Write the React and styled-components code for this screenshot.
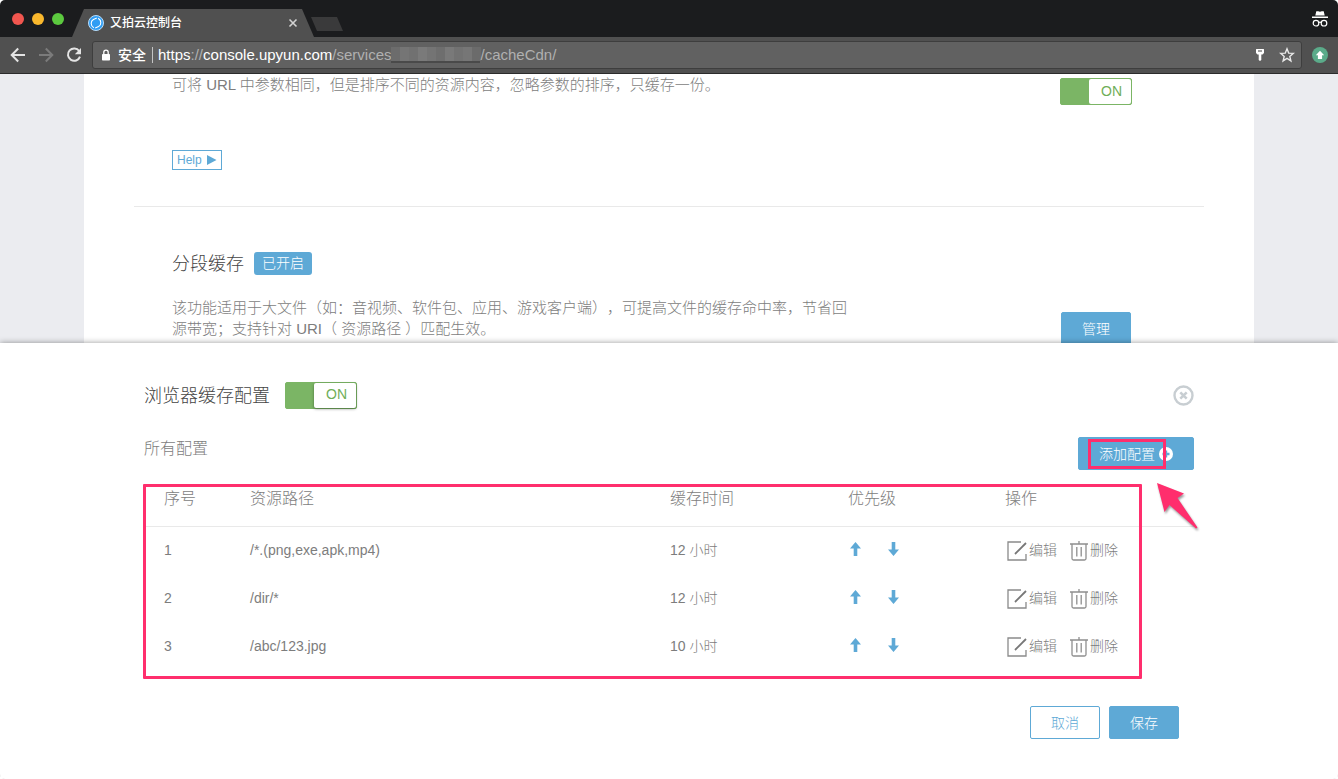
import { useState } from "react"
import styled, { createGlobalStyle } from "styled-components"

const configs = [
    { id: 1, path: "/*.(png,exe,apk,mp4)", time: "12 小时" },
    { id: 2, path: "/dir/*", time: "12 小时" },
    { id: 3, path: "/abc/123.jpg", time: "10 小时" },
]

const mosaic = ["#6c6c6c", "#757575", "#717171", "#7a7a7a", "#747474", "#6e6e6e", "#797979", "#727272", "#767676", "#6b6b6b"]

export default function App() {
    return (
        <>
            <GlobalStyle />
            <Window>
                <Browser />
                <Services />
                <CacheDrawer />
            </Window>
        </>
    )
}

function Browser() {
    return (
        <header>
            <TabStrip>
                <Lights>
                    <Light color="#f1564f" />
                    <Light color="#fab82d" />
                    <Light color="#5cc93f" />
                </Lights>
                <Tab>
                    <svg width="16" height="16" viewBox="0 0 16 16" fill="none">
                        <circle cx="8" cy="8" r="7.5" fill="#2f9df4" stroke="#b9ddfa" />
                        <path d="M5.800 12.800C2.400 10.800 2.400 6 5.400 4.400L8.800 3M10.200 3.200c3.400 2 3.400 6.800.4 8.400L7.200 13" stroke="#fff" strokeWidth="1.100" />
                    </svg>
                    <TabTitle>又拍云控制台</TabTitle>
                    <IconButton aria-label="关闭标签页">
                        <svg width="10" height="10" viewBox="0 0 10 10" stroke="#d2d2d2" strokeWidth="1.600">
                            <path d="M1.500 1.500l7 7M8.500 1.500l-7 7" />
                        </svg>
                    </IconButton>
                </Tab>
                <NewTab aria-label="新标签页" />
                <Incognito width="18" height="18" viewBox="0 0 18 18" fill="#fff">
                    <path d="M5.300 1.200h1.900l1.800.6 1.800-.6h1.900l1 4.300H4.300zM1 6.600h16v1.500H1z" />
                    <g fill="none" stroke="#fff" strokeWidth="1.200">
                        <circle cx="5" cy="13.200" r="2.800" />
                        <circle cx="13" cy="13.200" r="2.800" />
                        <path d="M7.700 12.600q1.300-.9 2.600 0" />
                    </g>
                </Incognito>
            </TabStrip>
            <Toolbar>
                <NavButtons>
                    <IconButton aria-label="后退">
                        <svg width="16" height="16" viewBox="0 0 16 16" fill="none" stroke="#e4e4e4" strokeWidth="2">
                            <path d="M15 8H2M8.200 1.500L1.700 8l6.500 6.500" />
                        </svg>
                    </IconButton>
                    <IconButton aria-label="前进">
                        <svg width="16" height="16" viewBox="0 0 16 16" fill="none" stroke="#7b7b7b" strokeWidth="2">
                            <path d="M1 8h13M7.800 1.500L14.300 8l-6.500 6.500" />
                        </svg>
                    </IconButton>
                    <IconButton aria-label="重新加载">
                        <svg width="16" height="16" viewBox="0 0 16 16" fill="none" stroke="#e4e4e4" strokeWidth="2">
                            <path d="M13.200 4A6.200 6.200 0 1 0 14 9.700" />
                            <path d="M15 1v6.200H8.800z" fill="#e4e4e4" stroke="none" />
                        </svg>
                    </IconButton>
                </NavButtons>
                <AddressBar>
                    <svg width="8" height="12" viewBox="0 0 8 12">
                        <rect y="5" width="8" height="6.500" rx=".8" fill="#fff" />
                        <path d="M1.800 5.500V3.300a2.200 2.200 0 0 1 4.400 0v2.200" fill="none" stroke="#fff" strokeWidth="1.300" />
                    </svg>
                    <Secure>安全</Secure>
                    <Url>
                        <b>https</b>://<b>console.upyun.com</b>/services
                        <Mosaic>
                            {mosaic.map((color, i) => <Tile key={i} color={color} />)}
                        </Mosaic>
                        /cacheCdn/
                    </Url>
                    <BarActions>
                        <IconButton aria-label="密码">
                            <svg width="10" height="14" viewBox="0 0 10 14">
                                <path d="M1.500 1h7q.5 0 .5.500V5L7.500 6.500H6.300V12l-1.300 1-1.300-1V6.500H2.500L1 5V1.500Q1 1 1.500 1z" fill="#fff" />
                                <path d="M3 3h4" stroke="#616161" strokeWidth="1.200" />
                            </svg>
                        </IconButton>
                        <IconButton aria-label="收藏">
                            <svg width="16" height="16" viewBox="0 0 16 16" fill="none" stroke="#e8e8e8" strokeWidth="1.400">
                                <path d="M8 1.800l1.700 4.300 4.600.3-3.500 3 1.100 4.500L8 11.400l-3.900 2.500 1.100-4.500-3.500-3 4.600-.3z" />
                            </svg>
                        </IconButton>
                    </BarActions>
                </AddressBar>
                <IconButton aria-label="扩展">
                    <svg width="16" height="16" viewBox="0 0 16 16">
                        <circle cx="8" cy="8" r="8" fill="#5bab8a" />
                        <path d="M8 3.800l4.200 4.400h-2.100V12H5.900V8.200H3.800z" fill="#fff" />
                    </svg>
                </IconButton>
            </Toolbar>
        </header>
    )
}

function Services() {
    return (
        <Page>
            <Card>
                <Section>
                    <div>
                        <Description>可将 URL 中参数相同，但是排序不同的资源内容，忽略参数的排序，只缓存一份。</Description>
                        <HelpButton>
                            Help
                            <svg width="10" height="10" viewBox="0 0 10 10" fill="#5ea9d6">
                                <path d="M0 0l9.500 5L0 10z" />
                            </svg>
                        </HelpButton>
                    </div>
                    <SectionAction>
                        <Toggle label="忽略参数排序" />
                    </SectionAction>
                </Section>
                <Divider />
                <Section $spaced>
                    <div>
                        <Heading>
                            <h2>分段缓存</h2>
                            <Badge>已开启</Badge>
                        </Heading>
                        <Description>
                            该功能适用于大文件（如：音视频、软件包、应用、游戏客户端），可提高文件的缓存命中率，节省回源带宽；支持针对 URI（ 资源路径 ）匹配生效。
                        </Description>
                    </div>
                    <SectionAction $spaced>
                        <Button>管理</Button>
                    </SectionAction>
                </Section>
            </Card>
        </Page>
    )
}

function CacheDrawer() {
    return (
        <Drawer>
            <DrawerContent>
                <DrawerHeader>
                    <h2>浏览器缓存配置</h2>
                    <Toggle label="浏览器缓存配置" raised />
                    <IconButton aria-label="关闭">
                        <svg width="21" height="21" viewBox="0 0 21 21" fill="none" stroke="#c8ced2">
                            <circle cx="10.500" cy="10.500" r="9" strokeWidth="2.400" />
                            <path d="M7.300 7.300l6.400 6.400M13.700 7.300l-6.400 6.400" strokeWidth="2.600" />
                        </svg>
                    </IconButton>
                </DrawerHeader>
                <ListHeader>
                    <h3>所有配置</h3>
                    <AddButton>
                        添加配置
                        <svg width="14" height="14" viewBox="0 0 14 14">
                            <circle cx="7" cy="7" r="7" fill="#fff" />
                            <path d="M7 3.500v7M3.500 7h7" stroke="#5ea9d6" strokeWidth="2.400" />
                        </svg>
                        <AddMark />
                    </AddButton>
                </ListHeader>
                <TableArea>
                    <Table>
                        <colgroup>
                            <col width="86" />
                            <col width="40%" />
                            <col width="178" />
                            <col width="157" />
                            <col />
                        </colgroup>
                        <thead>
                            <tr>
                                <th>序号</th>
                                <th>资源路径</th>
                                <th>缓存时间</th>
                                <th>优先级</th>
                                <th>操作</th>
                            </tr>
                        </thead>
                        <tbody>
                            {configs.map((config) => (
                                <tr key={config.id}>
                                    <td>{config.id}</td>
                                    <td>{config.path}</td>
                                    <td>{config.time}</td>
                                    <td>
                                        <Priority>
                                            <IconButton aria-label="上移">
                                                <ArrowIcon />
                                            </IconButton>
                                            <IconButton aria-label="下移">
                                                <ArrowIcon down />
                                            </IconButton>
                                        </Priority>
                                    </td>
                                    <td>
                                        <Actions>
                                            <ActionButton>
                                                <EditIcon />
                                                编辑
                                            </ActionButton>
                                            <ActionButton>
                                                <TrashIcon />
                                                删除
                                            </ActionButton>
                                        </Actions>
                                    </td>
                                </tr>
                            ))}
                        </tbody>
                    </Table>
                    <TableMark />
                    <Pointer width="46" height="52" viewBox="0 0 46 52">
                        <path d="M2 1l27 10.500-6.500 4.500L42.500 45.500l-1.500 1L14.500 23 9.500 30z" fill="#ff2e6d" />
                    </Pointer>
                </TableArea>
                <DrawerFooter>
                    <Button $outline>取消</Button>
                    <Button>保存</Button>
                </DrawerFooter>
            </DrawerContent>
        </Drawer>
    )
}

function Toggle({ label, raised }) {
    const [on, setOn] = useState(true)

    return (
        <Switch $raised={raised}>
            <input type="checkbox" aria-label={label} checked={on} onChange={() => setOn(!on)} />
            <span>{on ? "ON" : "OFF"}</span>
        </Switch>
    )
}

function ArrowIcon({ down }) {
    return (
        <svg width="11" height="14" viewBox="0 0 11 14" fill="#5ea9d6">
            {down
                ? <path d="M5.500 14L0 7.500h3.700V0h3.600v7.500H11z" />
                : <path d="M5.500 0L11 6.500H7.300V14H3.700V6.500H0z" />}
        </svg>
    )
}

function EditIcon() {
    return (
        <svg width="20" height="20" viewBox="0 0 20 20" fill="none" stroke="#8a8a8a" strokeWidth="1.300">
            <path d="M14 1H1v18h18V13" />
            <path d="M8 13L19 2" stroke="#777" strokeWidth="1.800" />
        </svg>
    )
}

function TrashIcon() {
    return (
        <svg width="18" height="20" viewBox="0 0 18 20" fill="none" stroke="#8f8f8f" strokeWidth="1.300">
            <path d="M0 3h18M9 0v3M2 3v14.500q0 1.500 1.500 1.500h11q1.500 0 1.500-1.500V3M6.800 6v9.500M11.200 6v9.500" />
        </svg>
    )
}

const GlobalStyle = createGlobalStyle`
    * {
        box-sizing: border-box;
    }

    body {
        margin: 0;
        background-color: #fff;
        color: #7d7d7d;
        font-family: "Liberation Sans", "Noto Sans CJK SC", sans-serif;
        font-size: 14px;
        font-weight: 300;
        line-height: 20px;
        text-spacing-trim: space-all;
    }

    h2, h3, p {
        margin: 0;
        font-weight: 300;
    }

    h2 {
        padding-top: 2px;
        font-size: 18px;
        line-height: 21px;
        color: #444;
    }

    h3 {
        font-size: 16px;
        line-height: 24px;
    }

    button {
        font: inherit;
        cursor: pointer;
    }

    svg {
        display: block;
        flex: none;
    }
`

const Window = styled.div`
    display: flex;
    flex-direction: column;
    height: 100vh;
    overflow: hidden;
    border-radius: 5px;
`

const TabStrip = styled.div`
    display: flex;
    align-items: flex-end;
    height: 37px;
    padding: 0 9px 0 12px;
    background-color: #1b1c1e;
`

const Lights = styled.div`
    display: flex;
    align-self: center;
    gap: 8px;
    margin-right: 8px;
`

const Light = styled.span`
    width: 12px;
    height: 12px;
    border-radius: 50%;
    background-color: ${({ color }) => color};
`

const Tab = styled.div`
    display: flex;
    align-items: center;
    width: 242px;
    height: 28px;
    padding: 0 16px;
    background-color: #505050;
    clip-path: polygon(0 100%, 12px 0, 230px 0, 100% 100%);
`

const TabTitle = styled.span`
    flex: 1;
    margin-left: 6px;
    font-size: 12px;
    font-weight: 500;
    color: #fff;
`

const NewTab = styled.button`
    width: 32px;
    height: 14px;
    margin: 0 auto 6px -3px;
    border: none;
    background-color: #3a3a3b;
    clip-path: polygon(0 0, 26px 0, 100% 100%, 6px 100%);
`

const Incognito = styled.svg`
    align-self: center;
`

const Toolbar = styled.div`
    display: flex;
    align-items: center;
    gap: 10px;
    height: 37px;
    padding: 0 10px;
    border-bottom: 1px solid #2b2b2b;
    background-color: #505050;
`

const NavButtons = styled.div`
    display: flex;
    gap: 12px;
`

const IconButton = styled.button`
    padding: 0;
    border: none;
    background: none;
`

const AddressBar = styled.div`
    flex: 1;
    display: flex;
    align-items: center;
    height: 28px;
    padding: 0 6px 0 9px;
    border: 1px solid #3e3e3e;
    border-radius: 3px;
    background-color: #616161;
`

const Secure = styled.span`
    margin: 0 5px 0 8px;
    padding-right: 6px;
    border-right: 1px solid #c4c4c4;
    font-size: 14px;
    line-height: 16px;
    font-weight: 500;
    color: #fff;
`

const Url = styled.div`
    flex: 1;
    display: flex;
    align-items: center;
    font-size: 15px;
    font-weight: 400;
    color: #b0b0b0;

    b {
        font-weight: 400;
        color: #fff;
    }
`

const BarActions = styled.div`
    display: flex;
    align-items: center;
    gap: 14px;
`

const Mosaic = styled.span`
    display: flex;
    width: 89px;
    height: 16px;
    border-bottom: 2px solid #4a4a4a;
`

const Tile = styled.span`
    flex: 1;
    background-color: ${({ color }) => color};
`

const Page = styled.main`
    flex: 1;
    min-height: 0;
    padding: 0 84px;
    overflow: hidden;
    background-color: #ebecf0;
`

const Card = styled.div`
    max-width: 1170px;
    height: 100%;
    margin: 0 auto;
    padding: 0 50px;
    background-color: #fff;
`

const Section = styled.section`
    display: flex;
    justify-content: space-between;
    padding: ${({ $spaced }) => ($spaced ? "45px" : "0")} 72px 36px 38px;
`

const SectionAction = styled.div`
    display: flex;
    justify-content: center;
    align-items: flex-start;
    width: 72px;
    padding-top: ${({ $spaced }) => ($spaced ? "60px" : "4px")};
`

const Heading = styled.div`
    display: flex;
    align-items: center;
    gap: 10px;
    margin-bottom: 22px;
`

const Badge = styled.span`
    padding: 0 8px;
    border-radius: 3px;
    background-color: #5ea9d6;
    font-size: 14px;
    line-height: 23px;
    color: #fff;
`

const Description = styled.p`
    max-width: 680px;
    font-size: 15px;
    line-height: 21px;
`

const HelpButton = styled.button`
    display: flex;
    align-items: center;
    gap: 5px;
    height: 20px;
    margin-top: 55px;
    padding: 0 4px;
    border: 1px solid #5ea9d6;
    background-color: #fff;
    color: #5ea9d6;

    && {
        font-size: 12px;
    }
`

const Divider = styled.hr`
    height: 1px;
    margin: 0;
    border: none;
    background-color: #e9e9e9;
`

const Switch = styled.label`
    position: relative;
    display: flex;
    width: 72px;
    height: 27px;
    padding-left: 28px;
    border: 1px solid #7bb565;
    border-radius: 2px;
    background-color: #7bb565;
    color: #6fae58;
    cursor: pointer;

    input {
        position: absolute;
        inset: 0;
        margin: 0;
        opacity: 0;
    }

    span {
        flex: 1;
        border-radius: 2px;
        background-color: #fff;
        box-shadow: ${({ $raised }) => ($raised ? "0 1px 3px rgba(0, 0, 0, 0.4)" : "none")};
        line-height: ${({ $raised }) => ($raised ? "22px" : "25px")};
        text-align: center;
        text-indent: 3px;
    }
`

const Button = styled.button`
    min-width: 70px;
    height: 33px;
    padding: 0 20px;
    border: 1px solid #5ea9d6;
    border-radius: 2px;
    background-color: ${({ $outline }) => ($outline ? "#fff" : "#5ea9d6")};
    color: ${({ $outline }) => ($outline ? "#5ea9d6" : "#fff")};
`

const AddButton = styled(Button)`
    position: relative;
    display: flex;
    align-items: center;
    gap: 4px;
`

// pink marks drawn over the page
const AddMark = styled.span`
    position: absolute;
    top: 1px;
    left: 9px;
    width: 78px;
    height: 30px;
    border: 3px solid #ff2e6d;
`

const TableMark = styled.div`
    position: absolute;
    inset: 10px 52px -8px -1px;
    border: 3px solid #ff2e6d;
    border-radius: 1px;
    pointer-events: none;
`

const Pointer = styled.svg`
    position: absolute;
    top: 8px;
    right: -7px;
    filter: drop-shadow(1px 2px 1px rgba(0, 0, 0, 0.4));
`

const Drawer = styled.section`
    position: relative;
    padding: 39px 24px 40px;
    background-color: #fff;
    box-shadow: 0 0 6px rgba(0, 0, 0, 0.4);
`

const DrawerContent = styled.div`
    max-width: 1050px;
    margin: 0 auto;
`

const DrawerHeader = styled.div`
    display: flex;
    align-items: center;
    gap: 15px;
    margin-bottom: 28px;

    ${IconButton} {
        margin-left: auto;
    }
`

const ListHeader = styled.div`
    display: flex;
    justify-content: space-between;
    align-items: flex-start;
    margin-bottom: 4px;

    ${AddButton} {
        width: 116px;
    }
`

const TableArea = styled.div`
    position: relative;
`

const Table = styled.table`
    width: 100%;
    table-layout: fixed;
    border-spacing: 0;

    th, td {
        text-align: left;
        font-weight: 300;
    }

    th {
        padding: 15px 0 17px 20px;
        border-bottom: 1px solid #e9e9e9;
        font-size: 16px;
        line-height: 20px;
    }

    td {
        height: 48px;
        padding: 0 0 2px 20px;
    }
`

const Priority = styled.div`
    display: flex;
    gap: 27px;
    padding: 0 0 2px 2px;
`

const Actions = styled.div`
    display: flex;
    gap: 13px;
    padding-left: 2px;
`

const ActionButton = styled(IconButton)`
    display: flex;
    align-items: center;
    gap: 2px;
    color: #7d7d7d;

    svg {
        margin-top: 2px;
    }
`

const DrawerFooter = styled.div`
    display: flex;
    justify-content: flex-end;
    gap: 9px;
    margin-top: 35px;
    padding-right: 15px;
`
